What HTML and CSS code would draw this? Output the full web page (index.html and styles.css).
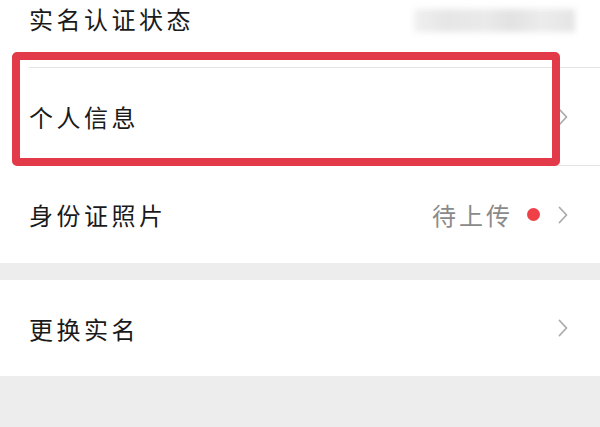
FILE: index.html
```html
<!DOCTYPE html>
<html lang="zh-CN">
<head>
<meta charset="utf-8">
<title>实名认证</title>
<link rel="stylesheet" href="styles.css">
</head>
<body>
<div class="page">
  <div class="group group-first">
    <div class="row">
      <div class="row-inner">
        <span class="label">实名认证状态</span>
        <span class="blurred"></span>
      </div>
    </div>
    <div class="row row-marked">
      <div class="row-inner">
        <span class="label">个人信息</span>
        <svg class="chev" width="10" height="18" viewBox="0 0 10 18"><polyline points="1.5,1.5 8.5,9 1.5,16.5" fill="none" stroke="#ababab" stroke-width="1.8" stroke-linecap="round" stroke-linejoin="round"/></svg>
      </div>
      <div class="mark"></div>
    </div>
    <div class="row">
      <div class="row-inner last">
        <span class="label">身份证照片</span>
        <span class="value">待上传</span>
        <span class="dot"></span>
        <svg class="chev" width="10" height="18" viewBox="0 0 10 18"><polyline points="1.5,1.5 8.5,9 1.5,16.5" fill="none" stroke="#ababab" stroke-width="1.8" stroke-linecap="round" stroke-linejoin="round"/></svg>
      </div>
    </div>
  </div>
  <div class="group">
    <div class="row">
      <div class="row-inner last short">
        <span class="label">更换实名</span>
        <svg class="chev" width="10" height="18" viewBox="0 0 10 18"><polyline points="1.5,1.5 8.5,9 1.5,16.5" fill="none" stroke="#ababab" stroke-width="1.8" stroke-linecap="round" stroke-linejoin="round"/></svg>
      </div>
    </div>
  </div>
</div>
</body>
</html>
```

FILE: styles.css
```css
html, body {
  margin: 0;
  padding: 0;
  background: #ededed;
}
body {
  width: 600px;
  height: 427px;
  overflow: hidden;
  font-family: "Noto Sans CJK SC", "Noto Sans", sans-serif;
}
.page {
  display: flex;
  flex-direction: column;
  gap: 17px;
}
.group {
  background: #ffffff;
}
.group-first {
  margin-top: -30px;
}
.row {
  padding-left: 29px;
  position: relative;
}
.row-inner {
  display: flex;
  align-items: center;
  height: 97px;
  border-bottom: 1px solid #e4e4e4;
  padding-right: 32px;
}
.row-inner.last {
  border-bottom: none;
  height: 97px;
}
.row-inner.short {
  height: 96px;
}
.label {
  flex: 1;
  font-size: 24px;
  letter-spacing: 3.5px;
  color: #1a1a1a;
}
.value {
  font-size: 24px;
  letter-spacing: 3px;
  color: #8a8a8a;
  margin-right: 14px;
}
.dot {
  width: 13px;
  height: 13px;
  border-radius: 50%;
  background: #ef4048;
  margin-right: 18px;
}
.chev {
  display: block;
}
.blurred {
  width: 161px;
  height: 23px;
  margin-right: -7px;
  margin-top: 4px;
  background: linear-gradient(90deg, #f0f0f0 0%, #e6e6e6 20%, #eaeaea 45%, #e2e2e2 60%, #ececec 80%, #e4e4e4 100%);
  filter: blur(3px);
}
.mark {
  position: absolute;
  left: 12px;
  top: -16px;
  width: 548px;
  height: 114px;
  box-sizing: border-box;
  border: 8px solid #e23a48;
  border-radius: 5px;
}
```
